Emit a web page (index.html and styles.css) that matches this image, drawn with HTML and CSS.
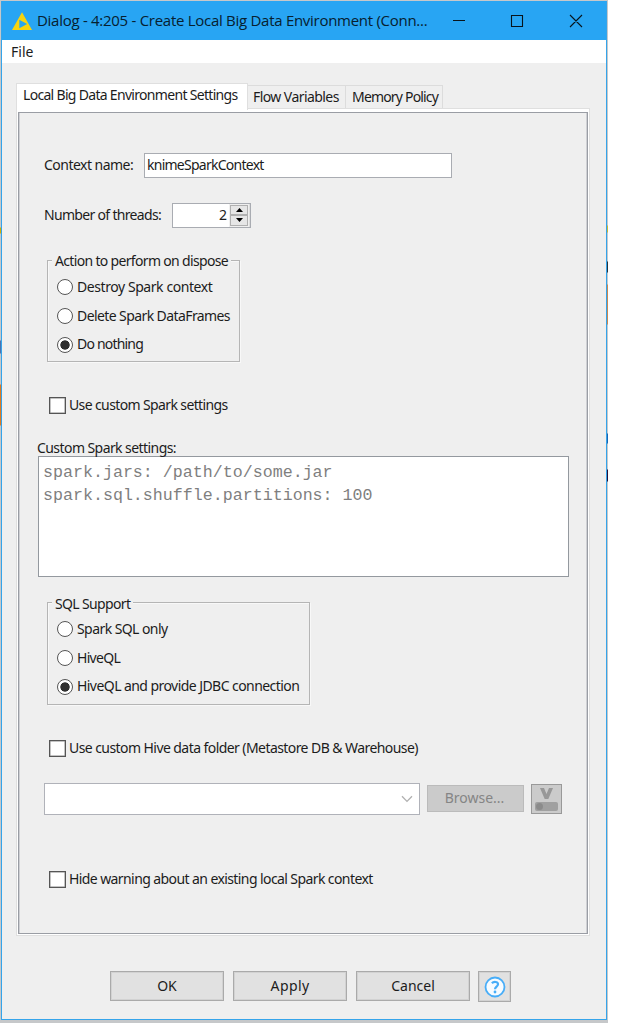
FILE: index.html
```
<!DOCTYPE html>
<html lang="en">
<head>
<meta charset="utf-8">
<title>Dialog - 4:205 - Create Local Big Data Environment</title>
<link rel="stylesheet" href="styles.css">
</head>
<body>
<div class="desktop">
<div class="window">
  <header class="titlebar">
    <svg class="app-icon" width="20" height="18" viewBox="0 0 20 18"><path d="M10 .3 20 18H0z" fill="#f8d40d"/><path d="M7.300 7.800 15.200 12 7.300 16.200z" fill="#28a5ef"/></svg>
    <span class="title">Dialog - 4:205 - Create Local Big Data Environment (Conn...</span>
    <svg class="window-controls" width="140" height="20" viewBox="0 0 140 20" fill="none" stroke="#08141c" stroke-width="1.1"><path d="M5 9.5h12M63.500 4.500h11v11h-11zM122 4l12 12M134 4l-12 12"/></svg>
  </header>
  <nav class="menubar"><span class="menu-item">File</span></nav>
  <div class="tabs">
    <div class="tab tab-active"><span class="t-settings">Local Big Data Environment Settings</span></div>
    <div class="tab tab-flow"><span class="t-flow">Flow Variables</span></div>
    <div class="tab tab-memory"><span class="t-memory">Memory Policy</span></div>
  </div>
  <main class="page">
    <div class="panel">
      <div class="row context-row"><label class="t-context">Context name:</label><div class="input context-input"><span class="t-knime">knimeSparkContext</span></div></div>
      <div class="row threads-row"><label class="t-threads">Number of threads:</label>
        <div class="spinner"><span class="spinner-value">2</span>
          <div class="spinner-buttons">
            <div class="step"><svg width="7" height="4" viewBox="0 0 7 4"><path d="M3.500 0 7 4H0z"/></svg></div>
            <div class="step"><svg width="7" height="4" viewBox="0 0 7 4"><path d="M3.500 4 7 0H0z"/></svg></div>
          </div>
        </div>
      </div>
      <section class="group dispose">
        <div class="group-title"><span class="t-action">Action to perform on dispose</span></div>
        <div class="radio"><i class="dot"></i><span class="t-destroy">Destroy Spark context</span></div>
        <div class="radio"><i class="dot"></i><span class="t-delete">Delete Spark DataFrames</span></div>
        <div class="radio"><i class="dot dot-on"></i><span class="t-nothing">Do nothing</span></div>
      </section>
      <div class="check use-custom"><i class="box"></i><span class="t-usecustom">Use custom Spark settings</span></div>
      <div class="area-label"><span class="t-customlabel">Custom Spark settings:</span></div>
      <pre class="area">spark.jars: /path/to/some.jar
spark.sql.shuffle.partitions: 100</pre>
      <section class="group sql">
        <div class="group-title"><span class="t-sql">SQL Support</span></div>
        <div class="radio"><i class="dot"></i><span class="t-sqlonly">Spark SQL only</span></div>
        <div class="radio"><i class="dot"></i><span class="t-hive">HiveQL</span></div>
        <div class="radio"><i class="dot dot-on"></i><span class="t-jdbc">HiveQL and provide JDBC connection</span></div>
      </section>
      <div class="check hive-folder"><i class="box"></i><span class="t-folder">Use custom Hive data folder (Metastore DB &amp; Warehouse)</span></div>
      <div class="folder-row">
        <div class="combo"><svg width="12" height="8" viewBox="0 0 12 8"><path d="M1 1.200 6 6.400 11 1.200" fill="none" stroke="#b0b0b0" stroke-width="1.300"/></svg></div>
        <div class="browse"><span class="t-browse">Browse...</span></div>
        <div class="variable"><svg width="28" height="28" viewBox="0 0 28 28"><path d="M8 3h4l2.500 6L17 3h4l-4.700 11h-3.600z" fill="#989898"/><rect x="3" y="17" width="23" height="9" rx="2" fill="#a0a0a0"/><circle cx="7.500" cy="21.500" r="3.500" fill="#8b8b8b"/></svg></div>
      </div>
      <div class="check hide-warning"><i class="box"></i><span class="t-hide">Hide warning about an existing local Spark context</span></div>
    </div>
  </main>
  <footer class="actions">
    <div class="button"><span class="t-ok">OK</span></div>
    <div class="button"><span class="t-apply">Apply</span></div>
    <div class="button"><span class="t-cancel">Cancel</span></div>
    <div class="button help"><svg width="22" height="22" viewBox="0 0 22 22" fill="none"><circle cx="11" cy="11" r="9.500" fill="#f6fbff" stroke="#47adf8" stroke-width="1.800"/><path d="M7.900 7.300C9.500 5.400 14 5.400 14 8.200c0 2.300-3 2.500-3 5" stroke="#47adf8" stroke-width="2.200"/><circle cx="11" cy="16" r="1.400" fill="#47adf8"/></svg></div>
  </footer>
</div>
</div>
</body>
</html>
```
FILE: styles.css
```
* { box-sizing: border-box; }
body { margin: 0; background: #fff; font: 14px/18px "Noto Sans", sans-serif; color: #1c1c1c; }
.desktop {
  width: 608px; height: 1023px; padding: 1px 1px 3px 1px;
  background:
    linear-gradient(#0000 227px, #d0b000 228px 233px, #0000 234px 340px, #4d72ad 341px 353px, #0000 354px 384px, #e07a20 385px 425px, #0000 426px) 0 0 / 1px 100% no-repeat,
    linear-gradient(#0000 225px, #c8b838 226px 232px, #0000 233px 261px, #26323a 262px 272px, #0000 273px 284px, #c88850 285px 324px, #0000 325px 433px, #1a64b0 434px 443px, #0000 444px 469px, #241038 470px 481px, #0000 482px) 607px 0 / 1px 100% no-repeat,
    #c6c8ca;
}
.window { width: 606px; height: 1019px; display: flex; flex-direction: column; background: #efefef; border: 1px solid #35a4ea; border-top: 0; }
span, label { white-space: nowrap; }
.titlebar { height: 39px; flex: none; display: flex; align-items: center; background: #28a5f3; padding-left: 10px; }
.title { font: 15px/20px "Open Sans", sans-serif; letter-spacing: -.28px; width: 392px; margin: -2px 0 0 5px; color: #07202f; }
.window-controls { margin-left: 19px; flex: none; }
.menubar { height: 23px; flex: none; background: #fff; padding: 3px 0 0 9px; }
.tabs { display: flex; align-items: flex-end; height: 46px; flex: none; margin-left: 14px; }
.tab { height: 24px; border: 1px solid #dcdcdc; border-left: 0; background: #efefef; padding: 2px 0 0 5px; }
.tab-active { width: 232px; height: 27px; border: 1px solid #dfdfdf; border-bottom: 0; background: #fff; padding: 2px 0 0 6px; margin-bottom: -1px; position: relative; }
.tab-flow { width: 98px; }
.tab-memory { width: 97px; padding-left: 6px; }
.page { width: 574px; height: 828px; flex: none; margin: -1px 0 0 14px; border: 1px solid #dfdfdf; background: #fff; padding: 3px 1px 1px 1px; }
.panel { height: 822px; border: 1px solid #9a9da4; box-shadow: inset 1px 0 #cfd0d4, inset -1px 0 #cfd0d4; background: #efefef; padding-top: 39px; }
.row { display: flex; align-items: center; height: 26px; padding-left: 25px; }
.input { background: #fff; border: 1px solid #a9acb2; height: 25px; display: flex; align-items: center; }
.context-row label { width: 100px; }
.context-input { width: 308px; padding-left: 2px; }
.threads-row { margin-top: 24px; }
.threads-row label { width: 128px; }
.spinner { width: 79px; height: 25px; border: 1px solid #a9acb2; background: #fff; display: flex; align-items: center; justify-content: flex-end; }
.spinner-value { margin-right: 2px; }
.spinner-buttons { height: 23px; width: 21px; background: #efefef; padding: 1px; display: grid; border-right: 1px solid #ddd; }
.step { border: 1px solid #b0b0b0; background: #e6e6e6; display: flex; justify-content: center; align-items: center; }
.group { border: 1px solid #b5b5b5; box-shadow: 1px 1px #fff8, inset 1px 1px #fff8; margin-left: 28px; padding: 0 0 0 8px; }
.group-title { height: 18px; margin-top: -9px; }
.group-title span { display: inline-block; background: #efefef; padding: 0 3px; margin-left: -4px; }
.dispose { width: 193px; height: 102px; margin-top: 32px; }
.radio { height: 28.700px; display: flex; align-items: center; gap: 4px; position: relative; top: 3px; }
.radio span { margin-top: -1px; }
.dot { width: 16px; height: 16px; flex: none; border: 1.500px solid #555; border-radius: 50%; background: #fff; margin-left: 1px; }
.dot-on { background: radial-gradient(circle, #303030 4.300px, #fff 5px); }
.check { height: 18px; display: flex; align-items: center; gap: 3px; margin-left: 30px; }
.box { width: 17px; height: 17px; flex: none; border: 1px solid #555; box-shadow: inset 0 0 0 .500px #888; background: #fff; }
.use-custom { margin-top: 34px; }
.area-label { margin: 25px 0 0 18px; height: 17px; }
.area { margin: 0 0 0 19px; width: 531px; height: 121px; border: 1px solid #94999f; background: #fff; padding: 5px 4px; color: #7f7f7f; font: 16.650px/22.500px "Liberation Mono", monospace; }
.sql { width: 263px; height: 103px; margin-top: 25px; }
.sql .group-title { margin-top: -8px; }
.sql .radio { top: 2px; }
.hive-folder { margin-top: 34px; }
.folder-row { display: flex; margin: 26px 0 0 25px; height: 32px; }
.combo { width: 376px; height: 32px; border: 1px solid #b0b2b9; background: #fff; display: flex; align-items: center; justify-content: flex-end; padding-right: 6px; }
.browse { width: 97px; height: 27px; margin: 2px 0 0 7px; border: 1px solid #bbb; background: #cbcbcb; color: #858585; text-align: center; line-height: 24px; padding-right: 2px; }
.variable { width: 31px; height: 30px; margin: 1px 0 0 7px; border: 1px solid #999; background: #cbcbcb; }
.hide-warning { margin-top: 55px; }
.actions { display: flex; margin: 35px 0 0 108px; gap: 9px; }
.button { width: 114px; height: 30px; border: 1px solid #aaa; box-shadow: inset 0 0 0 1px #d2d2d2; background: #e1e1e1; display: flex; align-items: center; justify-content: center; }
.help { width: 33px; height: 31px; margin-left: -1px; }

/* Tracking per label */
.t-settings { letter-spacing: -.69px; }
.t-flow { letter-spacing: -.57px; }
.t-memory { letter-spacing: -.82px; }
.t-context { letter-spacing: -.52px; }
.t-knime { letter-spacing: -.74px; }
.t-threads { letter-spacing: -.68px; }
.t-action { letter-spacing: -.67px; }
.t-destroy { letter-spacing: -.43px; }
.t-delete { letter-spacing: -.59px; }
.t-nothing { letter-spacing: -.8px; }
.t-usecustom { letter-spacing: -.62px; }
.t-customlabel { letter-spacing: -.57px; }
.t-sql { letter-spacing: -.64px; }
.t-sqlonly { letter-spacing: -.57px; }
.t-hive { letter-spacing: -.7px; }
.t-jdbc { letter-spacing: -.56px; }
.t-folder { letter-spacing: -.57px; }
.t-hide { letter-spacing: -.59px; }
.t-apply { letter-spacing: .4px; }
```
